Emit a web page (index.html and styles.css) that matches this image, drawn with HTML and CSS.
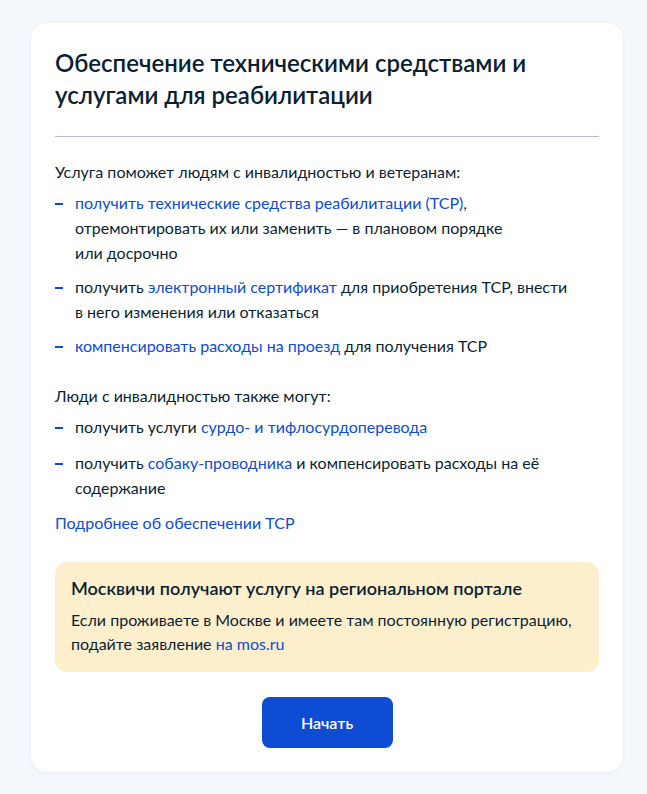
FILE: index.html
```
<!DOCTYPE html>
<html lang="ru">
<head>
  <meta charset="UTF-8">
  <meta name="viewport" content="width=device-width, initial-scale=1.0">
  <title>Обеспечение техническими средствами и услугами для реабилитации</title>
  <link rel="stylesheet" href="styles.css">
</head>
<body>
  <div class="page">
    <div class="card">
      <h1>Обеспечение техническими средствами и услугами для реабилитации</h1>
      <hr class="divider">

      <p>Услуга поможет людям с&nbsp;инвалидностью и&nbsp;ветеранам:</p>
      <ul class="dash-list">
        <li><a href="#">получить технические средства реабилитации (ТСР)</a>, отремонтировать их&nbsp;или заменить&nbsp;— в&nbsp;плановом порядке или&nbsp;досрочно</li>
        <li>получить <a href="#">электронный сертификат</a> для приобретения ТСР, внести в&nbsp;него изменения или&nbsp;отказаться</li>
        <li><a href="#">компенсировать расходы на&nbsp;проезд</a> для получения ТСР</li>
      </ul>

      <p>Люди с&nbsp;инвалидностью также могут:</p>
      <ul class="dash-list loose">
        <li>получить услуги <a href="#">сурдо- и&nbsp;тифлосурдоперевода</a></li>
        <li>получить <a href="#">собаку-проводника</a> и&nbsp;компенсировать расходы на&nbsp;её содержание</li>
      </ul>

      <p class="more"><a href="#">Подробнее об&nbsp;обеспечении ТСР</a></p>

      <div class="notice">
        <h3>Москвичи получают услугу на&nbsp;региональном портале</h3>
        <p>Если проживаете в&nbsp;Москве и&nbsp;имеете там постоянную регистрацию, подайте заявление <a href="#">на&nbsp;mos.ru</a></p>
      </div>

      <div class="actions">
        <button class="btn-primary">Начать</button>
      </div>
    </div>
  </div>
</body>
</html>
```

FILE: styles.css
```
body {
  margin: 0;
  background: #f4f7fc;
  font-family: Lato, "Noto Sans", sans-serif;
  color: #0b1f33;
  font-size: 16px;
  line-height: 24px;
}
.page {
  padding: 23px 24px 23px 31px;
}
.card {
  background: #ffffff;
  border-radius: 16px;
  padding: 24px;
  box-shadow: 0 1px 4px rgba(11, 31, 51, 0.06);
}
h1 {
  margin: 0;
  font-size: 24px;
  line-height: 32px;
  font-weight: 600;
}
.divider {
  border: 0;
  height: 1px;
  background: #b0bfd6;
  margin: 25px 0 23px;
}
p {
  margin: 0;
}
a {
  color: #0d4cd3;
  text-decoration: none;
}
.dash-list {
  list-style: none;
  margin: 6px 0 26px;
  padding: 0;
}
.dash-list li {
  position: relative;
  padding-left: 20px;
  line-height: 25px;
  margin-bottom: 9px;
}
.dash-list.loose li {
  margin-bottom: 11px;
}
.dash-list li:last-child {
  margin-bottom: 0;
}
/* синее тире слева от пункта */
.dash-list li::before {
  content: "";
  position: absolute;
  left: 0;
  top: 13px;
  width: 8px;
  height: 2px;
  background: #0d4cd3;
}
.more {
  margin-top: -15px;
}
.notice {
  margin-top: 27px;
  background: #feefcc;
  border-radius: 12px;
  padding: 14px 16px 16px;
}
.notice h3 {
  margin: 0 0 8px;
  font-size: 18px;
  line-height: 24px;
  font-weight: 600;
}
.actions {
  display: flex;
  justify-content: center;
  margin-top: 25px;
}
.btn-primary {
  background: #0d4cd3;
  color: #ffffff;
  border: 0;
  border-radius: 8px;
  font-family: inherit;
  font-size: 16px;
  font-weight: 600;
  width: 131px;
  height: 51px;
  cursor: pointer;
}
```
